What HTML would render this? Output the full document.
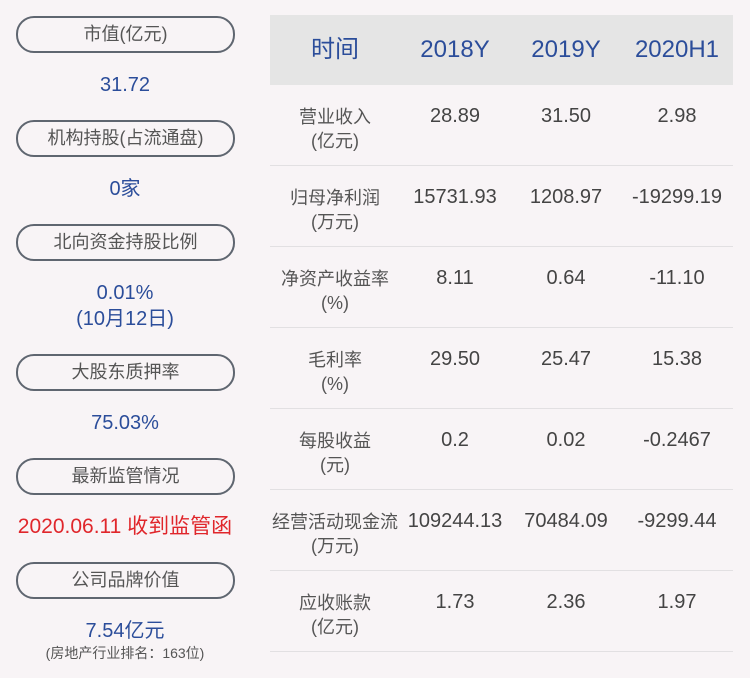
<!DOCTYPE html>
<html><head><meta charset="utf-8"><style>
body{margin:0;width:750px;height:678px;background:#f8f4f6;font-family:"Liberation Sans","Noto Sans CJK SC",sans-serif;position:relative;overflow:hidden}
.p{position:absolute;left:16px;width:215px;height:33px;border:2px solid #5f6670;border-radius:18px;text-align:center;line-height:33px;font-size:18px;color:#555}
.v{position:absolute;left:0;width:250px;text-align:center;font-size:20px;color:#2b4d9a;line-height:26px}
.hd{position:absolute;left:270px;top:15px;width:463px;height:70px;background:#e5e5e5}
.c{position:absolute;text-align:center;width:120px}
.h{font-size:24px;color:#2b4d9a;top:15px;height:70px;line-height:70px}
.l{font-size:18px;color:#555;line-height:24px;width:130px}
.n{font-size:20px;color:#444}
.ln{position:absolute;left:270px;width:463px;height:1px;background:#e2e0e2}
</style></head><body>
<div class="p" style="top:16px">市值(亿元)</div>
<div class="v" style="top:72px">31.72</div>
<div class="p" style="top:120px">机构持股(占流通盘)</div>
<div class="v" style="top:176px">0家</div>
<div class="p" style="top:224px">北向资金持股比例</div>
<div class="v" style="top:280px">0.01%<br>(10月12日)</div>
<div class="p" style="top:354px">大股东质押率</div>
<div class="v" style="top:410px">75.03%</div>
<div class="p" style="top:458px">最新监管情况</div>
<div class="v" style="top:514px;color:#e0262b;font-size:21px">2020.06.11 收到监管函</div>
<div class="p" style="top:562px">公司品牌价值</div>
<div class="v" style="top:618px">7.54亿元</div>
<div class="v" style="top:643px;font-size:14px;color:#555;line-height:20px">(房地产行业排名：163位)</div>
<div class="hd"></div>
<div class="c h" style="left:275px">时间</div>
<div class="c h" style="left:395px">2018Y</div>
<div class="c h" style="left:506px">2019Y</div>
<div class="c h" style="left:617px">2020H1</div>
<div class="c l" style="left:270px;top:105px">营业收入<br>(亿元)</div>
<div class="c n" style="left:395px;top:105px">28.89</div>
<div class="c n" style="left:506px;top:105px">31.50</div>
<div class="c n" style="left:617px;top:105px">2.98</div>
<div class="ln" style="top:165px"></div>
<div class="c l" style="left:270px;top:186px">归母净利润<br>(万元)</div>
<div class="c n" style="left:395px;top:186px">15731.93</div>
<div class="c n" style="left:506px;top:186px">1208.97</div>
<div class="c n" style="left:617px;top:186px">-19299.19</div>
<div class="ln" style="top:246px"></div>
<div class="c l" style="left:270px;top:267px">净资产收益率<br>(%)</div>
<div class="c n" style="left:395px;top:267px">8.11</div>
<div class="c n" style="left:506px;top:267px">0.64</div>
<div class="c n" style="left:617px;top:267px">-11.10</div>
<div class="ln" style="top:327px"></div>
<div class="c l" style="left:270px;top:348px">毛利率<br>(%)</div>
<div class="c n" style="left:395px;top:348px">29.50</div>
<div class="c n" style="left:506px;top:348px">25.47</div>
<div class="c n" style="left:617px;top:348px">15.38</div>
<div class="ln" style="top:408px"></div>
<div class="c l" style="left:270px;top:429px">每股收益<br>(元)</div>
<div class="c n" style="left:395px;top:429px">0.2</div>
<div class="c n" style="left:506px;top:429px">0.02</div>
<div class="c n" style="left:617px;top:429px">-0.2467</div>
<div class="ln" style="top:489px"></div>
<div class="c l" style="left:270px;top:510px">经营活动现金流<br>(万元)</div>
<div class="c n" style="left:395px;top:510px">109244.13</div>
<div class="c n" style="left:506px;top:510px">70484.09</div>
<div class="c n" style="left:617px;top:510px">-9299.44</div>
<div class="ln" style="top:570px"></div>
<div class="c l" style="left:270px;top:591px">应收账款<br>(亿元)</div>
<div class="c n" style="left:395px;top:591px">1.73</div>
<div class="c n" style="left:506px;top:591px">2.36</div>
<div class="c n" style="left:617px;top:591px">1.97</div>
<div class="ln" style="top:651px"></div>
</body></html>
